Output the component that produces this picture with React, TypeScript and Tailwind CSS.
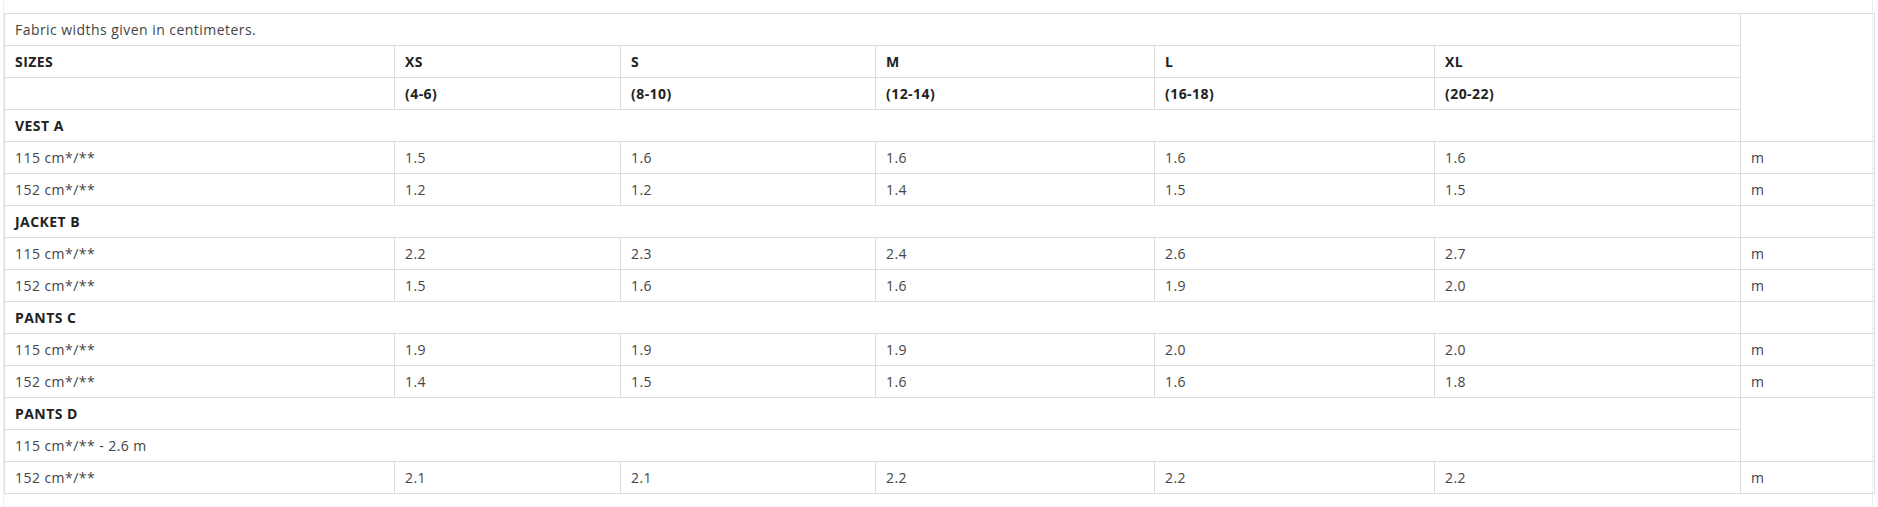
import React from 'react';

type Row =
  | { kind: 'title'; label: string }
  | { kind: 'data'; label: string; values: string[] };

const sizes = ['XS', 'S', 'M', 'L', 'XL'];
const ranges = ['(4-6)', '(8-10)', '(12-14)', '(16-18)', '(20-22)'];

const groups: Row[] = [
  { kind: 'title', label: 'VEST A' },
  { kind: 'data', label: '115 cm*/**', values: ['1.5', '1.6', '1.6', '1.6', '1.6'] },
  { kind: 'data', label: '152 cm*/**', values: ['1.2', '1.2', '1.4', '1.5', '1.5'] },
  { kind: 'title', label: 'JACKET B' },
  { kind: 'data', label: '115 cm*/**', values: ['2.2', '2.3', '2.4', '2.6', '2.7'] },
  { kind: 'data', label: '152 cm*/**', values: ['1.5', '1.6', '1.6', '1.9', '2.0'] },
  { kind: 'title', label: 'PANTS C' },
  { kind: 'data', label: '115 cm*/**', values: ['1.9', '1.9', '1.9', '2.0', '2.0'] },
  { kind: 'data', label: '152 cm*/**', values: ['1.4', '1.5', '1.6', '1.6', '1.8'] },
];

const cell = 'border border-[#dddddd] h-[32px] px-[10px] py-0 align-middle text-left';
const bold = 'font-bold text-[#222222]';
const light = 'font-normal text-[#444444]';

export default function App() {
  return (
    <div className="h-[507px] w-[1878px] bg-white">
      <div className="ml-[3px] h-full w-[1870px] border-x border-[#eeeeee] pt-[13px]">
        <table
          className="w-[1870px] table-fixed border-collapse text-[14px] leading-none tracking-[0.45px]"
          style={{ fontFamily: '"Open Sans", "Liberation Sans", sans-serif' }}
        >
          <colgroup>
            <col className="w-[390px]" />
            <col className="w-[226px]" />
            <col className="w-[255px]" />
            <col className="w-[279px]" />
            <col className="w-[280px]" />
            <col className="w-[306px]" />
            <col className="w-[134px]" />
          </colgroup>
          <tbody>
            <tr>
              <td colSpan={6} className={`${cell} ${light}`}>
                Fabric widths given in centimeters.
              </td>
              <td rowSpan={4} className={cell}></td>
            </tr>
            <tr>
              <td className={`${cell} ${bold}`}>SIZES</td>
              {sizes.map((s) => (
                <td key={s} className={`${cell} ${bold}`}>
                  {s}
                </td>
              ))}
            </tr>
            <tr>
              <td className={cell}></td>
              {ranges.map((r) => (
                <td key={r} className={`${cell} ${bold}`}>
                  {r}
                </td>
              ))}
            </tr>
            {groups.map((row, i) =>
              row.kind === 'title' ? (
                <tr key={i}>
                  <td colSpan={6} className={`${cell} ${bold}`}>
                    {row.label}
                  </td>
                  {i > 0 && <td className={cell}></td>}
                </tr>
              ) : (
                <tr key={i}>
                  <td className={`${cell} ${light}`}>{row.label}</td>
                  {row.values.map((v, j) => (
                    <td key={j} className={`${cell} ${light}`}>
                      {v}
                    </td>
                  ))}
                  <td className={`${cell} ${light}`}>m</td>
                </tr>
              )
            )}
            <tr>
              <td colSpan={6} className={`${cell} ${bold}`}>
                PANTS D
              </td>
              <td rowSpan={2} className={cell}></td>
            </tr>
            <tr>
              <td colSpan={6} className={`${cell} ${light}`}>
                115 cm*/** - 2.6 m
              </td>
            </tr>
            <tr>
              <td className={`${cell} ${light}`}>152 cm*/**</td>
              {['2.1', '2.1', '2.2', '2.2', '2.2'].map((v, j) => (
                <td key={j} className={`${cell} ${light}`}>
                  {v}
                </td>
              ))}
              <td className={`${cell} ${light}`}>m</td>
            </tr>
          </tbody>
        </table>
      </div>
    </div>
  );
}
